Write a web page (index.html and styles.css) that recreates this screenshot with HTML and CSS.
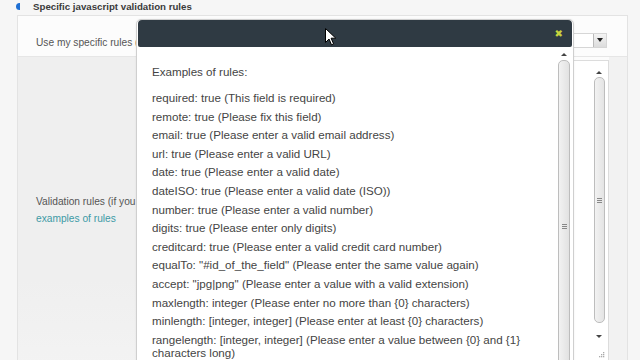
FILE: index.html
```html
<!DOCTYPE html>
<html>
<head>
<meta charset="utf-8">
<link rel="stylesheet" href="styles.css">
</head>
<body>
<div class="page">
  <div class="header">
    <span class="hicon"></span>
    <span class="htitle">Specific javascript validation rules</span>
  </div>
  <div class="panel">
    <div class="row1">
      <span class="label">Use my specific rules (</span>
      <div class="select"><span class="sel-btn"><span class="tri-down"></span></span></div>
    </div>
    <div class="row2">
      <div class="lcol">
        <div class="label">Validation rules (if you</div>
        <div class="link">examples of rules</div>
      </div>
      <div class="textarea">
        <div class="ta-space"></div>
        <div class="ta-scroll">
          <span class="tri-up small"></span>
          <div class="ta-thumb"><span class="grip"></span></div>
          <span class="tri-down small"></span>
          <span class="resize">
            <svg width="7" height="7" viewBox="0 0 7 7"><g fill="#aaa"><rect x="5" y="0" width="1.3" height="1.3"/><rect x="3" y="2" width="1.3" height="1.3"/><rect x="5" y="2" width="1.3" height="1.3"/><rect x="1" y="4" width="1.3" height="1.3"/><rect x="3" y="4" width="1.3" height="1.3"/><rect x="5" y="4" width="1.3" height="1.3"/></g></svg>
          </span>
        </div>
      </div>
      <div class="rstrip"></div>
    </div>
  </div>

  <div class="dialog">
    <div class="titlebar"><span class="close">&#x2716;</span></div>
    <div class="dbody">
      <div class="content">
        <p class="intro">Examples of rules:</p>
        <p>required: true (This field is required)</p>
        <p>remote: true (Please fix this field)</p>
        <p>email: true (Please enter a valid email address)</p>
        <p>url: true (Please enter a valid URL)</p>
        <p>date: true (Please enter a valid date)</p>
        <p>dateISO: true (Please enter a valid date (ISO))</p>
        <p>number: true (Please enter a valid number)</p>
        <p>digits: true (Please enter only digits)</p>
        <p>creditcard: true (Please enter a valid credit card number)</p>
        <p>equalTo: "#id_of_the_field" (Please enter the same value again)</p>
        <p>accept: "jpg|png" (Please enter a value with a valid extension)</p>
        <p>maxlength: integer (Please enter no more than {0} characters)</p>
        <p>minlength: [integer, integer] (Please enter at least {0} characters)</p>
        <p>rangelength: [integer, integer] (Please enter a value between {0} and {1} characters long)</p>
      </div>
      <div class="dscroll">
        <span class="tri-up small"></span>
        <div class="d-thumb"><span class="grip"></span></div>
      </div>
    </div>
  </div>

  <svg class="cursor" width="12" height="18" viewBox="0 0 12 18">
    <path d="M0.5 0.5 L0.5 14.5 L4 11 L6.5 16.8 L8.6 15.9 L6.1 10.2 L10.8 10.2 Z" fill="#fff" stroke="#000" stroke-width="1" stroke-linejoin="round"/>
  </svg>
</div>
</body>
</html>
```

FILE: styles.css
```css
html, body {
  margin: 0;
  padding: 0;
}
body {
  background: #f6f6f6;
  font-family: "Liberation Sans", Arial, sans-serif;
  overflow: hidden;
  width: 640px;
  height: 360px;
}
.page {
  position: relative;
  width: 640px;
  height: 360px;
  overflow: hidden;
}
.header {
  height: 15px;
  display: flex;
  align-items: center;
  padding-left: 16px;
}
.hicon {
  width: 4px;
  height: 7px;
  background: #1f6fd3;
  border-radius: 4px 0 0 4px;
  margin-top: -3px;
}
.htitle {
  margin-left: 13px;
  font-size: 9.7px;
  font-weight: bold;
  color: #3a3a3a;
  margin-top: -2px;
}
.panel {
  margin-left: 17px;
  width: 611px;
  height: 360px;
  box-sizing: border-box;
  border: 1px solid #e3e3e3;
  background: #fcfcfc;
  display: flex;
  flex-direction: column;
}
.label {
  font-size: 10.2px;
  color: #555;
  white-space: nowrap;
}
.row1 {
  height: 40px;
  display: flex;
  align-items: center;
  padding-left: 18px;
  padding-right: 20px;
  box-sizing: border-box;
}
.row1 .label {
  margin-top: 13px;
}
.select {
  margin-left: auto;
  margin-top: 8px;
  width: 468px;
  height: 15px;
  box-sizing: border-box;
  border: 1px solid #d6d6d6;
  background: #fff;
  display: flex;
  justify-content: flex-end;
}
.sel-btn {
  width: 13px;
  height: 13px;
  box-sizing: border-box;
  border-left: 1px solid #bbb;
  background: linear-gradient(#f4f4f4, #dcdcdc);
  display: flex;
  align-items: center;
  justify-content: center;
}
.tri-down {
  width: 0;
  height: 0;
  border-left: 3.5px solid transparent;
  border-right: 3.5px solid transparent;
  border-top: 4px solid #222;
}
.tri-up {
  width: 0;
  height: 0;
  border-left: 3px solid transparent;
  border-right: 3px solid transparent;
  border-bottom: 3px solid #444;
}
.tri-down.small {
  border-left-width: 3px;
  border-right-width: 3px;
  border-top-width: 3px;
  border-top-color: #444;
}
.row2 {
  flex: 1;
  display: flex;
  border-top: 1px solid #e6e6e6;
}
.lcol {
  width: 119px;
  background: linear-gradient(#efefef 0%, #efefef 70%, #f3f3f3 100%);
  border-right: 1px solid #dedede;
  padding-left: 18px;
  padding-top: 138px;
  box-sizing: border-box;
}
.lcol .label {
  line-height: 13px;
}
.link {
  font-size: 10.2px;
  color: #3c9aa6;
  line-height: 13px;
  margin-top: 4px;
}
.textarea {
  margin-left: 2px;
  margin-top: 3px;
  width: 470px;
  box-sizing: border-box;
  border: 1px solid #dcdcdc;
  border-bottom: none;
  background: #fff;
  display: flex;
}
.ta-space {
  flex: 1;
}
.ta-scroll {
  width: 12px;
  margin-right: 3px;
  display: flex;
  flex-direction: column;
  align-items: center;
  padding-top: 10px;
}
.ta-thumb {
  margin-top: 3px;
  width: 11px;
  height: 246px;
  box-sizing: border-box;
  border: 1px solid #bdbdbd;
  border-radius: 5px;
  background: linear-gradient(90deg, #f2f2f2, #e4e4e4);
  display: flex;
  align-items: center;
  justify-content: center;
  margin-bottom: 12px;
}
.grip {
  width: 5px;
  height: 5px;
  background: repeating-linear-gradient(#888 0 1px, transparent 1px 2px);
}
.resize {
  margin-top: 7px;
  margin-left: 4px;
  display: block;
  height: 7px;
}
.rstrip {
  flex: 1;
  background: #f2f2f2;
}

.dialog {
  position: absolute;
  left: 136px;
  top: 19px;
  width: 438px;
  height: 360px;
  box-sizing: border-box;
  border: 1px solid #cfcfcf;
  border-radius: 5px 5px 0 0;
  background: #fff;
  padding: 0 1px;
  box-shadow: 0 0 2px rgba(0,0,0,0.08);
}
.titlebar {
  height: 27px;
  background: #2f3a43;
  border-radius: 4px 4px 2px 2px;
  display: flex;
  align-items: center;
  justify-content: flex-end;
  padding-right: 9px;
}
.close {
  color: #c7d33e;
  font-size: 10px;
  font-family: "DejaVu Sans", sans-serif;
  font-weight: bold;
}
.dbody {
  display: flex;
}
.content {
  flex: 1;
  padding-left: 14px;
  padding-top: 18px;
  padding-right: 16px;
}
.content p {
  margin: 0 0 5.6px 0;
  font-size: 11.6px;
  line-height: 13px;
  color: #444;
}
.content p.intro {
  margin-bottom: 13px;
}
.dscroll {
  width: 12px;
  margin-right: 2px;
  display: flex;
  flex-direction: column;
  align-items: center;
  padding-top: 6px;
}
.d-thumb {
  margin-top: 4px;
  width: 12px;
  height: 400px;
  box-sizing: border-box;
  border: 1px solid #bdbdbd;
  border-radius: 5px;
  background: linear-gradient(90deg, #f2f2f2, #e2e2e2);
  display: flex;
  justify-content: center;
  padding-top: 163px;
}
.cursor {
  position: absolute;
  left: 325px;
  top: 28px;
}
```
